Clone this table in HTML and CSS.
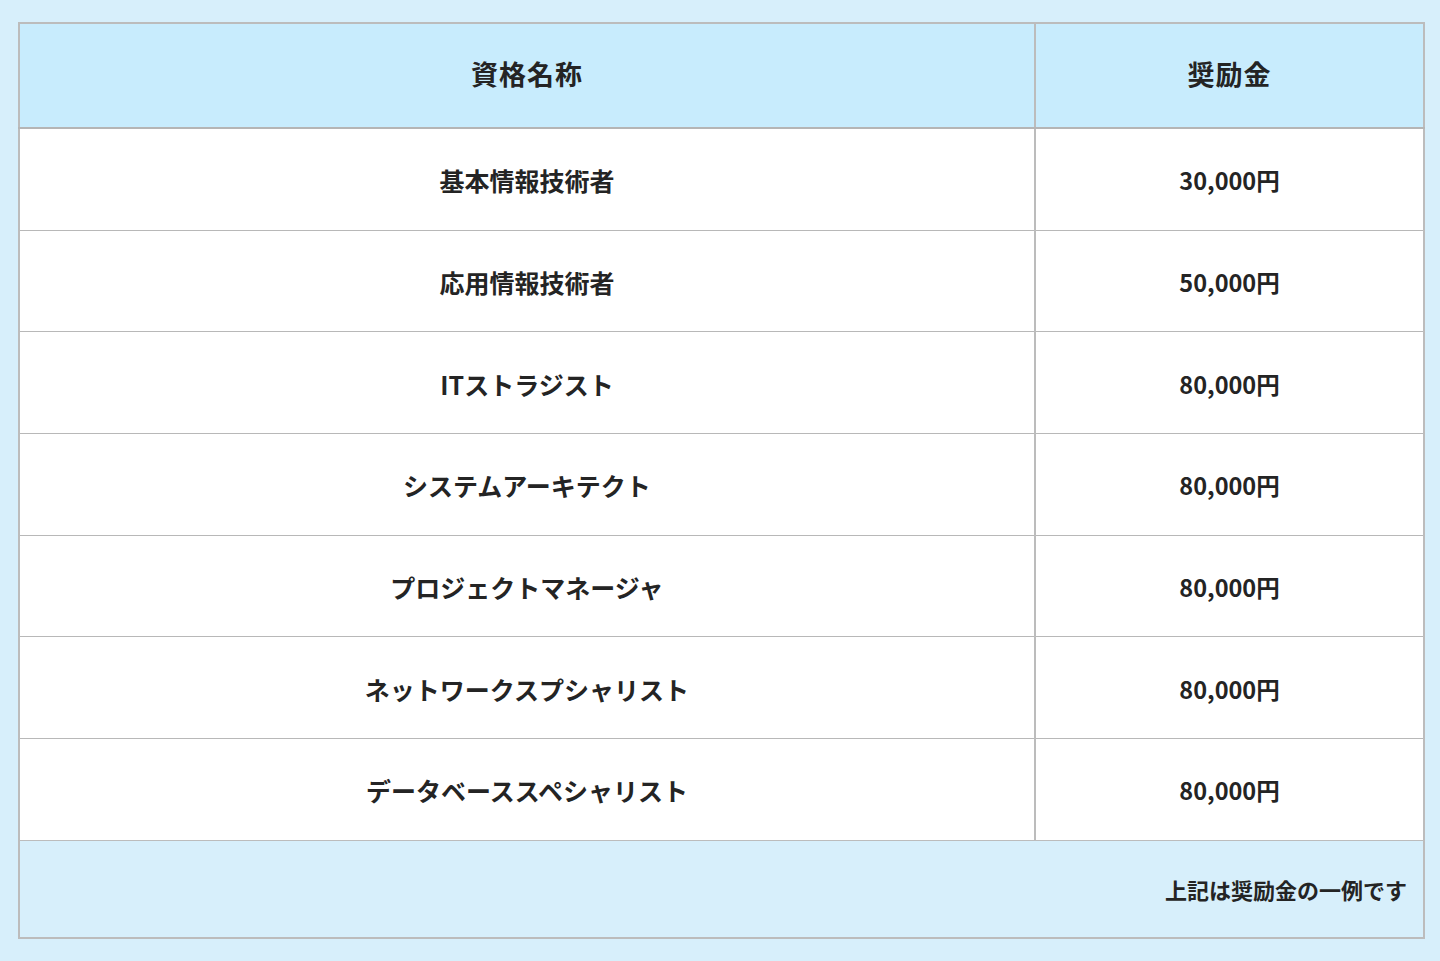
FILE: index.html
```html
<!DOCTYPE html>
<html lang="ja">
<head>
<meta charset="utf-8">
<link rel="stylesheet" href="styles.css">
</head>
<body>
<div class="wrap">
<table class="award">
  <thead>
    <tr><th class="c1">資格名称</th><th class="c2">奨励金</th></tr>
  </thead>
  <tbody>
    <tr><td>基本情報技術者</td><td class="price">30,000円</td></tr>
    <tr><td>応用情報技術者</td><td class="price">50,000円</td></tr>
    <tr><td>ITストラジスト</td><td class="price">80,000円</td></tr>
    <tr><td>システムアーキテクト</td><td class="price">80,000円</td></tr>
    <tr><td>プロジェクトマネージャ</td><td class="price">80,000円</td></tr>
    <tr><td>ネットワークスプシャリスト</td><td class="price">80,000円</td></tr>
    <tr><td>データベーススペシャリスト</td><td class="price">80,000円</td></tr>
  </tbody>
  <tfoot>
    <tr><td colspan="2" class="note">上記は奨励金の一例です</td></tr>
  </tfoot>
</table>
</div>
</body>
</html>
```

FILE: styles.css
```css
html, body {
  margin: 0;
  padding: 0;
  background: #d7effb;
}
body {
  font-family: "Noto Sans CJK JP", "Noto Sans", sans-serif;
  color: #242424;
}
.wrap {
  padding: 22px 15px 0 18px;
}
.award {
  width: 1407px;
  border-collapse: collapse;
  table-layout: fixed;
  border: 2px solid #bcbcbc;
}
.award th {
  background: #c8ecfd;
  height: 105px;
  font-size: 27px;
  font-weight: 700;
  letter-spacing: 1px;
  border-bottom: 2px solid #b5b5b5;
  padding: 0 0 2px 0;
  box-sizing: border-box;
  line-height: 1.2;
}
.award .c1 { width: 1016px; border-right: 2px solid #bcbcbc; }
.award tbody td {
  background: #fff;
  height: 98.7px;
  text-align: center;
  font-size: 25px;
  font-weight: 700;
  line-height: 1.2;
  border-bottom: 1px solid #b8b8b8;
  padding: 2px 0 0 0;
}
.award tbody td.price {
  font-size: 23.5px;
}
.award tbody td:first-child { border-right: 2px solid #bcbcbc; }
.award tbody tr:last-child td { border-bottom: 1px solid #bcbcbc; }
.award .note {
  background: #d7effb;
  height: 96px;
  text-align: right;
  font-size: 22px;
  font-weight: 700;
  line-height: 1.2;
  padding: 0 16px 0 0;
}
```
